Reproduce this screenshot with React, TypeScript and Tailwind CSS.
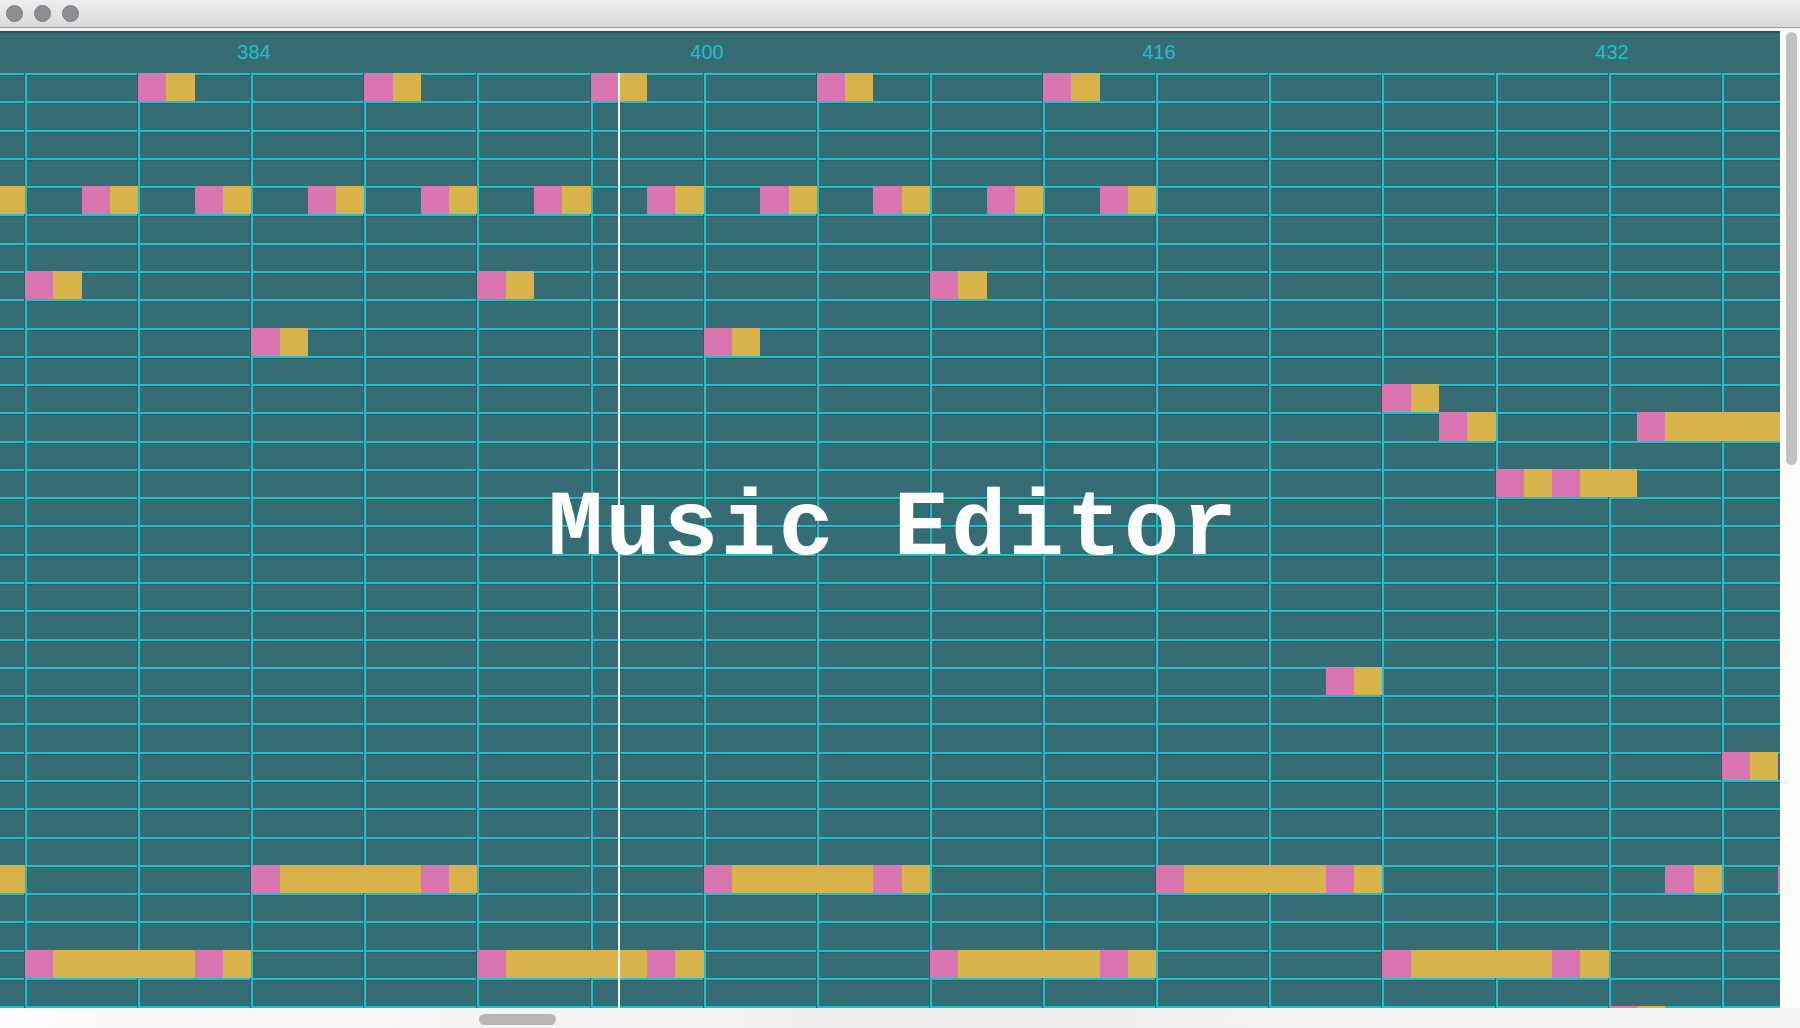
import React from "react";

const BW = 28.28;
const X = (b: number) => Math.round(25 + BW * (b - 376));
const Y = (r: number) => Math.round(BW * r);

type Note = { r: number; b: number; len: number; c: "p" | "y" };
const notes: Note[] = [];
const pair = (r: number, b: number) => {
  notes.push({ r, b, len: 1, c: "p" }, { r, b: b + 1, len: 1, c: "y" });
};
const longPat = (r: number, n: number) => {
  notes.push(
    { r, b: n, len: 1, c: "p" },
    { r, b: n + 1, len: 5, c: "y" },
    { r, b: n + 6, len: 1, c: "p" },
    { r, b: n + 7, len: 1, c: "y" }
  );
};

[380, 388, 396, 404, 412].forEach((b) => pair(0, b));
for (let b = 374; b <= 414; b += 4) pair(4, b);
[376, 392, 408].forEach((b) => pair(7, b));
[384, 400].forEach((b) => pair(9, b));
pair(11, 424);
pair(12, 426);
notes.push({ r: 12, b: 433, len: 1, c: "p" }, { r: 12, b: 434, len: 10, c: "y" });
notes.push(
  { r: 14, b: 428, len: 1, c: "p" },
  { r: 14, b: 429, len: 1, c: "y" },
  { r: 14, b: 430, len: 1, c: "p" },
  { r: 14, b: 431, len: 2, c: "y" }
);
pair(21, 422);
pair(24, 436);
[368, 384, 400, 416].forEach((n) => longPat(28, n));
pair(28, 434);
notes.push({ r: 28, b: 438, len: 1, c: "p" });
[376, 392, 408, 424].forEach((n) => longPat(31, n));
pair(33, 432);

const GRID_W = 1780;
const GRID_H = 935;
const ROWS = 34;

const labels = [
  { text: "384", beat: 384 },
  { text: "400", beat: 400 },
  { text: "416", beat: 416 },
  { text: "432", beat: 432 },
];

function Grid() {
  const vLines: number[] = [];
  for (let b = 376; b <= 440; b += 4) {
    const x = X(b);
    if (x < GRID_W) vLines.push(x);
  }
  const hLines: number[] = [];
  for (let r = 0; r <= ROWS; r++) hLines.push(Y(r));
  return (
    <svg width={GRID_W} height={GRID_H} className="block" shapeRendering="crispEdges">
      <rect x={0} y={0} width={GRID_W} height={GRID_H} fill="#366d75" />
      {hLines.map((y, i) => (
        <g key={"h" + i}>
          <rect x={0} y={y + 2} width={GRID_W} height={1} fill="#2c5f67" />
          <rect x={0} y={y} width={GRID_W} height={2} fill="#1fc0ca" />
        </g>
      ))}
      {vLines.map((x, i) => (
        <g key={"v" + i}>
          <rect x={x - 1} y={0} width={1} height={GRID_H} fill="#2c5f67" />
          <rect x={x} y={0} width={2} height={GRID_H} fill="#1fc0ca" />
        </g>
      ))}
      {notes.map((n, i) => {
        const x1 = X(n.b);
        const x2 = X(n.b + n.len);
        const y1 = Y(n.r);
        const y2 = Y(n.r + 1);
        return (
          <rect
            key={"n" + i}
            x={x1}
            y={y1}
            width={x2 - x1}
            height={y2 - y1}
            fill={n.c === "p" ? "#d975b1" : "#d8b34b"}
          />
        );
      })}
      <rect x={618} y={0} width={2} height={GRID_H} fill="#ffffff" />
    </svg>
  );
}

export default function App() {
  return (
    <div className="relative w-[1800px] h-[1028px] overflow-hidden bg-[#f6f6f6] flex flex-col">
      {/* title bar */}
      <div className="h-[28px] shrink-0 flex items-center gap-[11px] pl-[6px] bg-gradient-to-b from-[#eeeeee] to-[#d9d9d9] border-b border-[#9a9a9a]">
        <div className="w-[17px] h-[17px] rounded-full bg-[#8f8d92] border border-[#7d7b80]" />
        <div className="w-[17px] h-[17px] rounded-full bg-[#8f8d92] border border-[#7d7b80]" />
        <div className="w-[17px] h-[17px] rounded-full bg-[#8f8d92] border border-[#7d7b80]" />
      </div>
      <div className="h-[3px] shrink-0 bg-[#f4f4f4]" />
      {/* content */}
      <div className="h-[977px] shrink-0 flex">
        <div className="w-[1780px] flex flex-col">
          <div className="relative h-[42px] bg-[#366d75] border-t-2 border-[#22555d] font-['Liberation_Sans',Arial,sans-serif] text-[20px] text-[#22bfca]">
            {labels.map((l) => (
              <div
                key={l.text}
                className="absolute top-[7px] w-[60px] text-center leading-[24px]"
                style={{ left: X(l.beat) - 27 }}
              >
                {l.text}
              </div>
            ))}
          </div>
          <Grid />
        </div>
        <div className="w-[20px] bg-[#fbfbfb] pl-[6px] pt-[1px]">
          <div className="w-[11px] h-[433px] rounded-full bg-[#c1c1c1]" />
        </div>
      </div>
      {/* bottom scrollbar */}
      <div className="h-[20px] shrink-0 bg-gradient-to-r from-[#fbfbfb] via-[#eeeeee] to-[#f4f4f4] pl-[479px] pt-[6px]">
        <div className="w-[77px] h-[11px] rounded-full bg-[#b6b6b6]" />
      </div>
      {/* overlay title */}
      <div className="absolute left-[548px] top-[484px] font-['Liberation_Mono','Courier_New',monospace] font-bold text-[92px] leading-[92px] tracking-[2.4px] text-white whitespace-pre pointer-events-none">
        Music Editor
      </div>
    </div>
  );
}
